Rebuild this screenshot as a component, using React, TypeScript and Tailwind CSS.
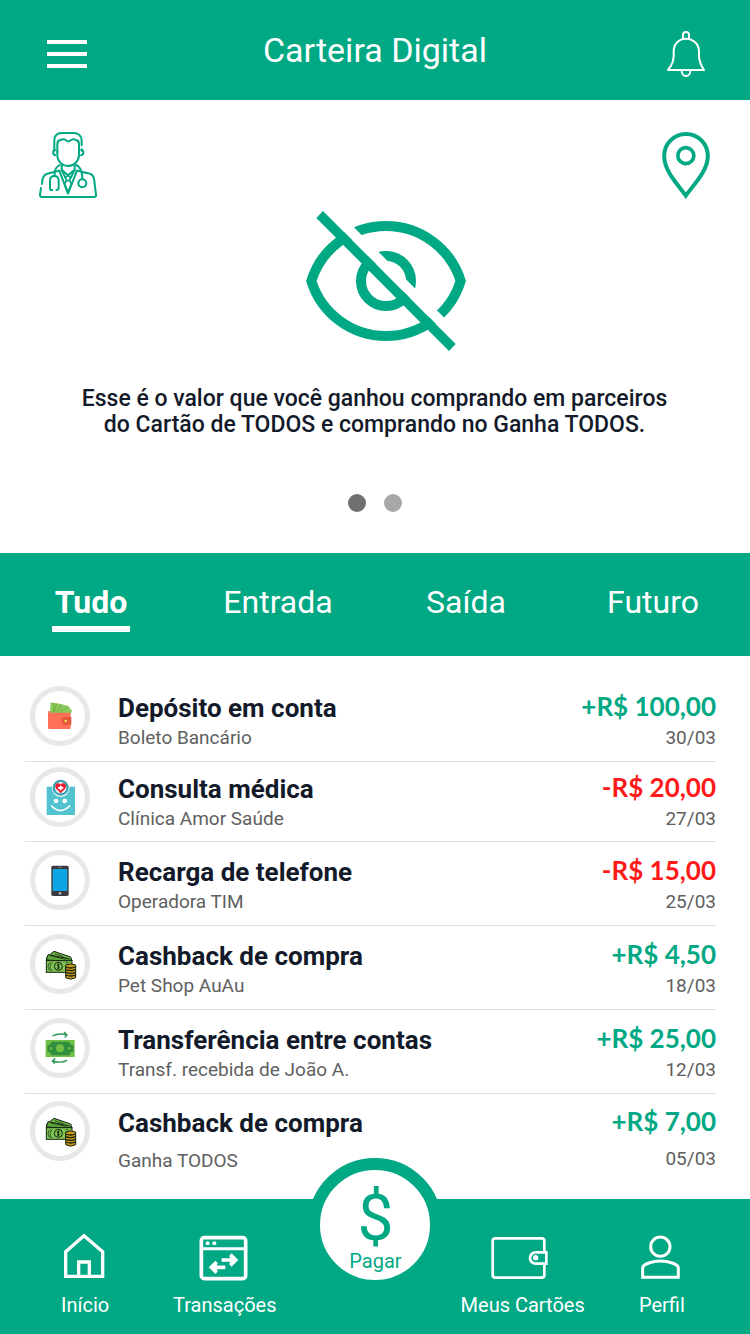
import React, { useState } from "react";

function MenuIcon() {
  return (
    <span className="flex w-10 flex-col gap-2">
      <span className="h-1 bg-white" />
      <span className="h-1 bg-white" />
      <span className="h-1 bg-white" />
    </span>
  );
}

function BellIcon() {
  return (
    <svg viewBox="81 33 114 138" className="h-[46px] w-[38px]" fill="none" stroke="currentColor" strokeWidth="6" aria-hidden="true">
      <path d="M84 150C94 138 101 125 101 108V95C101 72 117 56 138 56C159 56 177 72 177 95V108C177 125 184 138 192 150Z" strokeLinejoin="round" />
      <path d="M129 56V44a9 8 0 0 1 18 0V56" />
      <path d="M125 152c0 9 5 16 13 16s13-7 13-16" />
    </svg>
  );
}

function DoctorIcon() {
  return (
    <svg viewBox="57 36 174 198" className="h-[66px] w-[58px]" fill="none" stroke="currentColor" strokeWidth="6" strokeLinecap="round" strokeLinejoin="round" aria-hidden="true">
      <path d="M103 92V62C103 47 112 39 125 39H160C175 39 185 48 185 62V76M185 88V92" />
      <path d="M112 96V72C112 64 115 61 121 60C128 57 135 57 140 62Q145 66 150 62C156 57 162 57 168 60C174 61 177 64 177 72V96" />
      <path d="M112 94V106C112 126 130 138 144 138C160 138 177 124 177 106V94" />
      <path d="M105 90C98 91 97 104 106 106M184 90C192 91 193 104 183 106" />
      <path d="M125 136V149L144 166L164 149V136" />
      <path d="M119 135C110 140 104 148 104 160V168M169 135C180 140 187 150 187 177" />
      <path d="M116 152L82 161C70 164 66 178 66 192M63 204L60 225C60 230 62 231 66 231H222C227 231 229 228 228 224L222 176C220 166 214 162 204 160L172 152" />
      <path d="M118 152L144 221L171 152M125 150L136 173M164 150L152 173" />
      <path d="M136 172L144 167L152 172L149 182H139ZM139 182L134 192L144 216L154 192L149 182" strokeWidth="5" />
      <path d="M97 210H92Q90 210 90 204V182C90 173 95 168 103 168C111 168 116 174 116 182V204Q116 210 109 210" />
      <circle cx="187" cy="190" r="12" />
    </svg>
  );
}

function PinIcon() {
  return (
    <svg viewBox="66 336 143 201" className="h-[67px] w-12" fill="none" stroke="currentColor" strokeWidth="12" aria-hidden="true">
      <path d="M137 527C115 495 72 454 72 408A65.500 66 0 0 1 203 408C203 454 159 495 137 527Z" />
      <circle cx="137" cy="407" r="24" strokeWidth="11" />
    </svg>
  );
}

function HiddenEyeIcon() {
  return (
    <svg viewBox="48 33 480 420" className="h-[140px] w-40" aria-hidden="true">
      <g fill="none" stroke="currentColor" strokeWidth="30">
        <path d="M64 243A234.500 234.500 0 0 1 512 243A234.500 234.500 0 0 1 64 243Z" strokeMiterlimit="8" />
        <circle cx="288" cy="243" r="75" />
      </g>
      <path d="M120 32L500 412" stroke="#fff" strokeWidth="31" />
      <path d="M99 33L79 54L477 453L497 432Z" fill="currentColor" />
    </svg>
  );
}

function DepositIcon() {
  return (
    <svg viewBox="60 78 120 120" className="size-10" aria-hidden="true">
      <path d="M92 99L112 100L145 108L156 122L153 130H90Z" fill="#8bc95b" />
      <path d="M92 99L103 101L99 128M109 102L104 128M125 104L111 128M142 110L119 128" stroke="#5fa53c" strokeWidth="2" fill="none" />
      <path d="M84 125Q84 122 90 123V128H148Q152 128 152 132V174Q152 177 148 177H88Q84 177 84 173Z" fill="#ff7058" />
      <path d="M130 141H154V164H130L125 158V147Z" fill="#e4573d" />
      <circle cx="137" cy="153" r="4" fill="#ffd15c" />
    </svg>
  );
}

function MedicalIcon() {
  return (
    <svg viewBox="60 321 120 120" className="size-10" aria-hidden="true">
      <path d="M80 350H165V435H80Z" fill="#53c3d0" />
      <circle cx="122" cy="354" r="26" fill="#fff" />
      <circle cx="122" cy="353" r="24" fill="#3aa3b2" />
      <circle cx="122" cy="353" r="17" fill="#fff" />
      <path d="M122 369L110 357C101 345 113 335 122 344C131 335 143 345 134 357Z" fill="#ed1c2e" stroke="#ed1c2e" strokeWidth="2" />
      <path d="M119 347h6v4h5v5h-5v5h-6v-5h-5v-5h5Z" fill="#fff" />
      <circle cx="108" cy="393" r="7" fill="#fff" />
      <circle cx="134" cy="393" r="7" fill="#fff" />
      <path d="M95 408Q121 435 149 408" fill="none" stroke="#fff" strokeWidth="5" strokeLinecap="round" />
    </svg>
  );
}

function PhoneIcon() {
  return (
    <svg viewBox="60 60 120 120" className="size-10" aria-hidden="true">
      <rect x="94" y="77" width="52" height="91" rx="5" fill="#38393c" />
      <rect x="98" y="87" width="44" height="66" fill="#0ca4e2" />
      <path d="M114 82H126" stroke="#97999b" strokeWidth="2" />
      <circle cx="120" cy="160" r="4" fill="#b6b8ba" />
    </svg>
  );
}

function CashIcon() {
  return (
    <svg viewBox="60 309 120 120" className="size-10" stroke="#142313" aria-hidden="true">
      <path d="M81 348L102 331L152 348L156 360H79Z" fill="#74ba45" strokeWidth="3" />
      <path d="M79 357L84 341L146 353L155 361Z" fill="#5fa53c" strokeWidth="3" />
      <path d="M93 345L139 355M104 338L130 347" fill="none" strokeWidth="2" />
      <rect x="79" y="359" width="77" height="35" fill="#80c452" strokeWidth="3" />
      <path d="M92 365Q84 366 84 377Q84 388 93 389M98 365Q90 368 90 377Q90 386 98 389M137 365H145" fill="none" strokeWidth="2" />
      <circle cx="115" cy="376" r="12" fill="#80c452" strokeWidth="3" />
      <path d="M119 371C112 367 110 375 115 376S119 384 111 381M115 368V385" fill="none" strokeWidth="3" />
      <path d="M137 372Q152 365 167 372V410Q152 419 137 410Z" fill="#c9961a" strokeWidth="3" />
      <path d="M137 378Q152 384 167 378M137 386Q152 392 167 386M137 394Q152 400 167 394M137 402Q152 408 167 402" fill="none" strokeWidth="4" />
    </svg>
  );
}

function TransferIcon() {
  return (
    <svg viewBox="60 54 120 120" className="size-10" fill="none" aria-hidden="true">
      <rect x="77" y="90" width="87" height="51" fill="#71bf44" />
      <path d="M94 95H148Q149 105 160 106V125Q149 126 148 136H94Q93 126 82 125V106Q93 105 94 95Z" fill="#2f8f3c" />
      <circle cx="120" cy="115" r="12" fill="#71bf44" />
      <circle cx="93" cy="115" r="4" fill="#71bf44" />
      <circle cx="148" cy="115" r="4" fill="#71bf44" />
      <path d="M97 78Q116 68 140 75M132 66L141 75L134 83M141 151Q121 161 98 153M106 145L97 153L104 161" stroke="#29964f" strokeWidth="4" />
    </svg>
  );
}

function HomeIcon() {
  return (
    <svg viewBox="183 246 144 144" className="size-12" fill="none" stroke="currentColor" strokeWidth="10" aria-hidden="true">
      <path d="M197 379V305L252 257L308 305V379Z" />
      <path d="M236 379V336H268V379" />
    </svg>
  );
}

function TransactionsIcon() {
  return (
    <svg viewBox="602 246 144 144" className="size-12 overflow-visible" fill="none" stroke="currentColor" strokeWidth="11" aria-hidden="true">
      <rect x="603" y="263" width="133" height="123" rx="9" />
      <path d="M603 296H736" strokeWidth="9" />
      <path d="M664 330H704M690 314L706 330L690 346M675 352H635M649 336L633 352L649 368" />
      <path d="M690 318V342L704 330ZM649 340V364L635 352Z" fill="currentColor" strokeWidth="2" />
      <circle cx="622" cy="280" r="6" fill="currentColor" stroke="none" />
      <circle cx="642" cy="280" r="6" fill="currentColor" stroke="none" />
    </svg>
  );
}

function CardsIcon() {
  return (
    <svg viewBox="350 246 186 144" className="h-12 w-[62px] overflow-visible" fill="none" stroke="currentColor" strokeWidth="8" aria-hidden="true">
      <path d="M507 305V273Q507 265 499 265H360Q352 265 352 273V375Q352 383 360 383H499Q507 383 507 375V343" />
      <path d="M513 307H481A17 17 0 0 0 481 341H513Z" />
      <circle cx="481" cy="323" r="8" fill="currentColor" stroke="none" />
    </svg>
  );
}

function ProfileIcon() {
  return (
    <svg viewBox="790 246 144 144" className="size-12" fill="none" stroke="currentColor" strokeWidth="9" aria-hidden="true">
      <circle cx="857" cy="290" r="29" />
      <path d="M804 382V354C804 342 835 333 858 333C880 333 911 342 911 354V382Z" />
    </svg>
  );
}

type Spacing = "normal" | "compact" | "last";

interface Transaction {
  title: string;
  detail: string;
  amount: string;
  date: string;
  icon: React.ReactNode;
  spacing: Spacing;
}

const transactions: Transaction[] = [
  { title: "Depósito em conta", detail: "Boleto Bancário", amount: "+R$ 100,00", date: "30/03", icon: <DepositIcon />, spacing: "normal" },
  { title: "Consulta médica", detail: "Clínica Amor Saúde", amount: "-R$ 20,00", date: "27/03", icon: <MedicalIcon />, spacing: "compact" },
  { title: "Recarga de telefone", detail: "Operadora TIM", amount: "-R$ 15,00", date: "25/03", icon: <PhoneIcon />, spacing: "normal" },
  { title: "Cashback de compra", detail: "Pet Shop AuAu", amount: "+R$ 4,50", date: "18/03", icon: <CashIcon />, spacing: "normal" },
  { title: "Transferência entre contas", detail: "Transf. recebida de João A.", amount: "+R$ 25,00", date: "12/03", icon: <TransferIcon />, spacing: "normal" },
  { title: "Cashback de compra", detail: "Ganha TODOS", amount: "+R$ 7,00", date: "05/03", icon: <CashIcon />, spacing: "last" },
];

const rowSpacing: Record<Spacing, string> = {
  normal: "border-b pt-2 pb-2",
  compact: "border-b pt-[5px] pb-[7px]",
  last: "pt-[7px] pb-2",
};

function TransactionRow({ title, detail, amount, date, icon, spacing }: Transaction) {
  const amountColor = amount.startsWith("-") ? "text-[#ff1a1a]" : "text-[#00a884]";
  const isLast = spacing === "last";
  return (
    <li className={`flex items-start border-[#dedede] pl-[5px] ${rowSpacing[spacing]}`}>
      <span className="flex size-[60px] shrink-0 items-center justify-center rounded-full border-[5px] border-[#e8e8e8]">{icon}</span>
      <div className={`ml-7 flex flex-1 flex-col pt-[7px] leading-[30px] ${isLast ? "gap-2" : "gap-0"}`}>
        <span className="text-[26px] font-bold text-[#131a2a]">{title}</span>
        <span className="text-[19px] text-[#606060]">{detail}</span>
      </div>
      <div className={`flex flex-col items-end pt-1 ${isLast ? "gap-[7px]" : "gap-px"}`}>
        <span className={`font-[Lato,sans-serif] text-[26px] leading-8 font-bold ${amountColor}`}>{amount}</span>
        <span className="text-[19px] leading-[30px] text-[#606060]">{date}</span>
      </div>
    </li>
  );
}

const tabs = ["Tudo", "Entrada", "Saída", "Futuro"];

function NavItem({ label, children }: { label: string; children: React.ReactNode }) {
  return (
    <a href="#" className="flex flex-col items-center gap-[13px] pt-[33px] pb-[17px] whitespace-nowrap">
      {children}
      <span className="text-[20px] leading-6">{label}</span>
    </a>
  );
}

export default function App() {
  const [activeTab, setActiveTab] = useState("Tudo");
  return (
    <div className="flex min-h-screen flex-col bg-white font-[Roboto,sans-serif]">
      <header className="grid h-[100px] grid-cols-[1fr_auto_1fr] items-center bg-[#00a884] px-[45px] pt-2 text-white">
        <button type="button" aria-label="Menu" className="justify-self-start pl-0.5">
          <MenuIcon />
        </button>
        <h1 className="pb-2 text-[34px] leading-10">Carteira Digital</h1>
        <button type="button" aria-label="Notificações" className="justify-self-end">
          <BellIcon />
        </button>
      </header>

      <section className="flex flex-col pt-8 pr-10 pb-[41px] pl-[39px] text-[#00a884]">
        <div className="flex items-start justify-between">
          <button type="button" aria-label="Médico">
            <DoctorIcon />
          </button>
          <button type="button" aria-label="Localização">
            <PinIcon />
          </button>
        </div>
        <button type="button" aria-label="Mostrar saldo" className="mt-3 flex justify-center pl-[23px]">
          <HiddenEyeIcon />
        </button>
        <p className="mt-[35px] text-center text-[23px] leading-[26px] font-medium text-[#131a2a]">
          Esse é o valor que você ganhou comprando em parceiros
          <br />
          do Cartão de TODOS e comprando no Ganha TODOS.
        </p>
        <div className="mt-14 flex justify-center gap-[18px]">
          <button type="button" aria-label="Página 1" className="size-[18px] rounded-full bg-[#707070]" />
          <button type="button" aria-label="Página 2" className="size-[18px] rounded-full bg-[#a8a8a8]" />
        </div>
      </section>

      <nav className="grid grid-cols-[182fr_192fr_184fr_190fr] bg-[#00a884] pt-[29px] pr-0.5 pb-6 text-white">
        {tabs.map((tab) => (
          <button
            key={tab}
            type="button"
            onClick={() => setActiveTab(tab)}
            className={`justify-self-center border-b-[6px] px-[3px] pb-1 text-[32px] leading-10 ${
              tab === activeTab ? "border-white font-bold" : "border-transparent"
            }`}
          >
            {tab}
          </button>
        ))}
      </nav>

      <main className="flex-1 pt-[22px] pr-[34px] pl-[25px]">
        <ul>
          {transactions.map((item) => (
            <TransactionRow key={item.date} {...item} />
          ))}
        </ul>
      </main>

      <footer className="grid h-[135px] grid-cols-[130fr_149fr_152fr_142fr_136fr] items-start bg-[#00a884] px-5 text-white">
        <NavItem label="Início">
          <HomeIcon />
        </NavItem>
        <NavItem label="Transações">
          <TransactionsIcon />
        </NavItem>
        <button
          type="button"
          className="-mt-[41px] flex size-[134px] flex-col items-center justify-self-center rounded-full border-[12px] border-[#00a884] bg-white pt-[19px] text-[#00a884]"
        >
          <span className="text-[64px] leading-[60px]">$</span>
          <span className="text-[20px] leading-6">Pagar</span>
        </button>
        <NavItem label="Meus Cartões">
          <CardsIcon />
        </NavItem>
        <NavItem label="Perfil">
          <ProfileIcon />
        </NavItem>
      </footer>
    </div>
  );
}
